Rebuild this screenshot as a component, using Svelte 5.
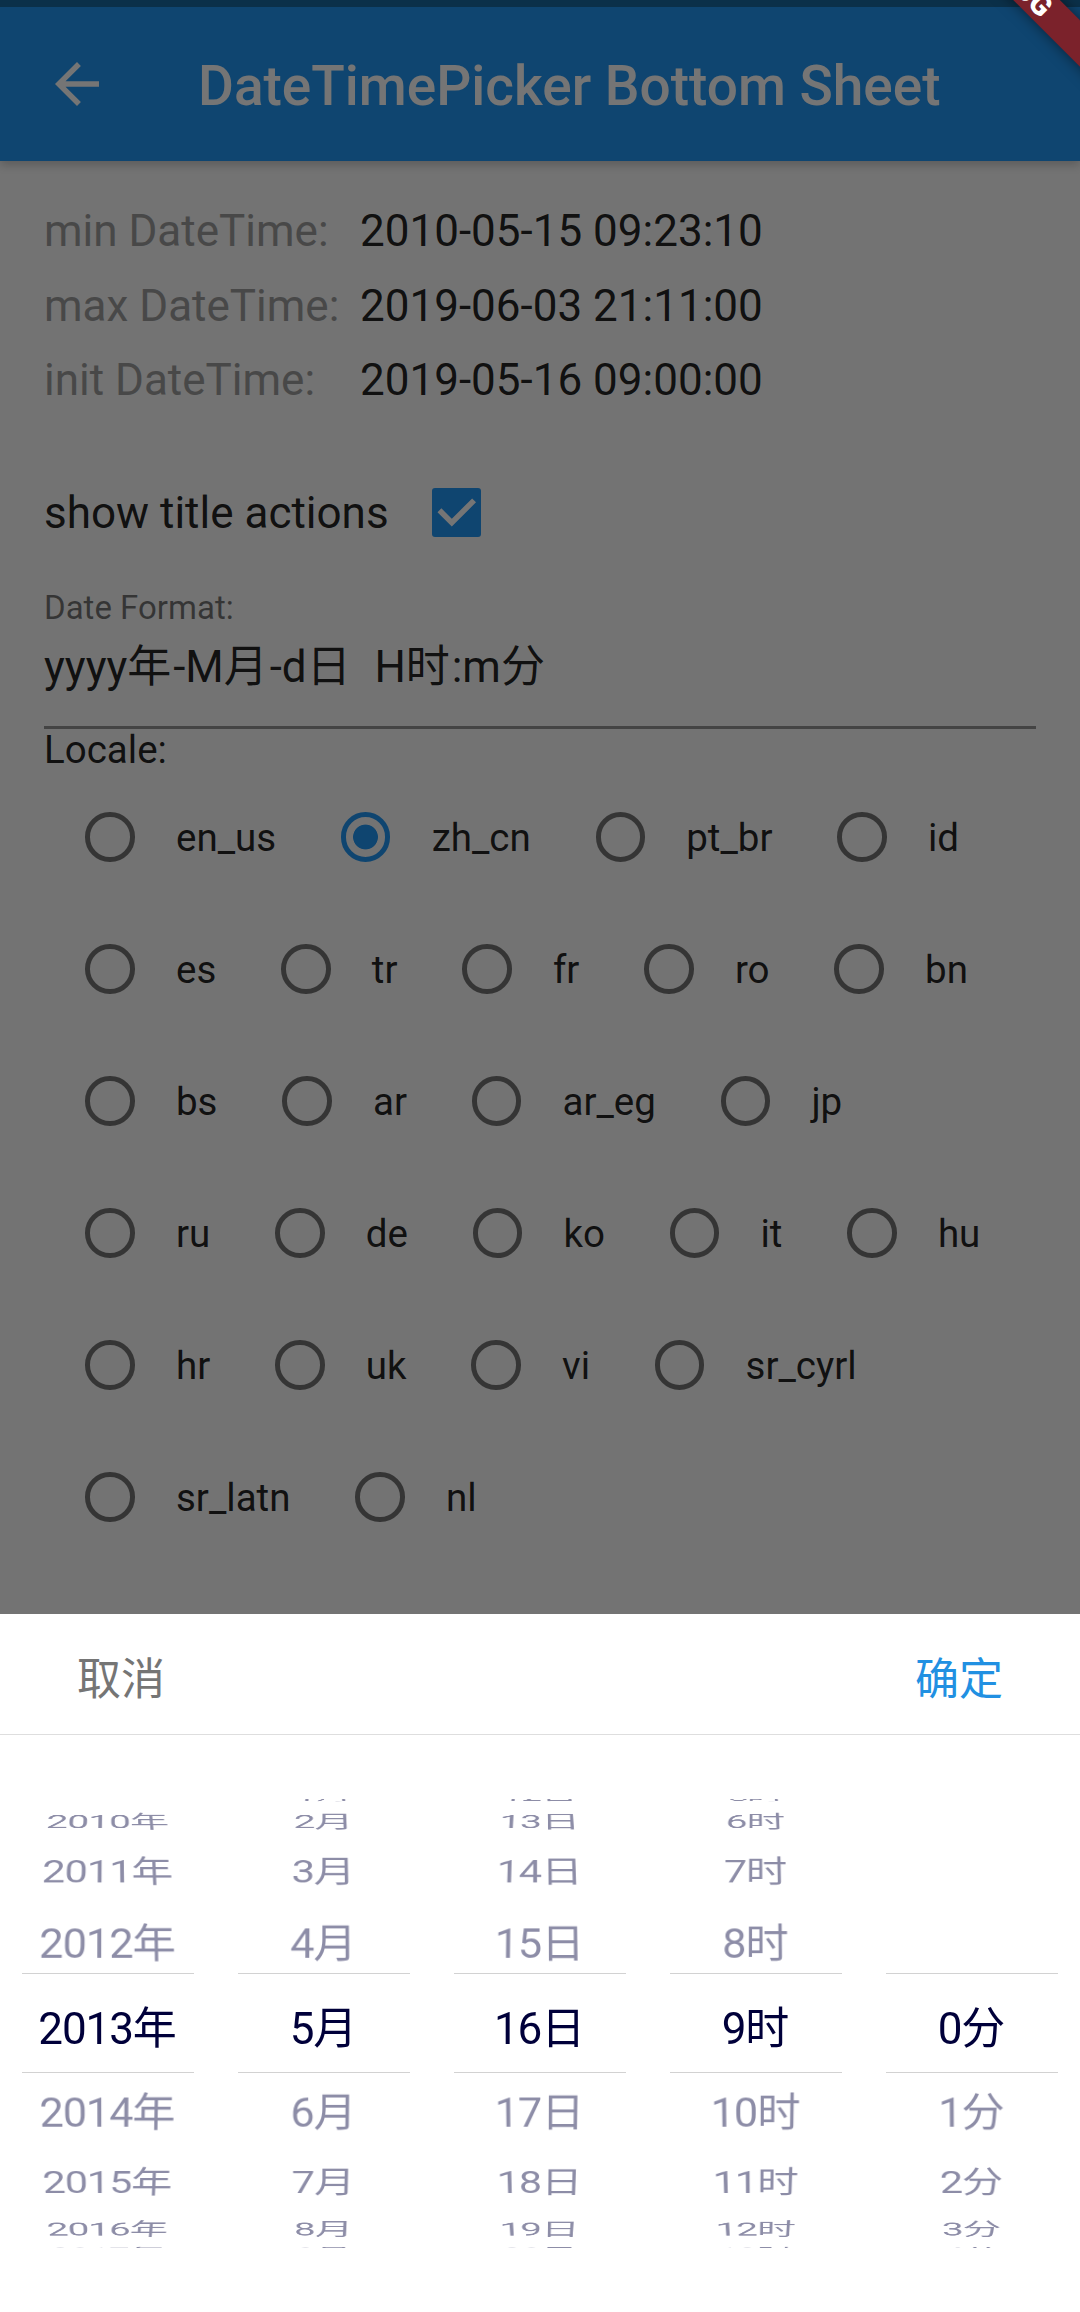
<script>
  const info = [
    ['min DateTime:', '2010-05-15 09:23:10'],
    ['max DateTime:', '2019-06-03 21:11:00'],
    ['init DateTime:', '2019-05-16 09:00:00'],
  ];

  const locales = [
    ['en_us', 'zh_cn', 'pt_br', 'id'],
    ['es', 'tr', 'fr', 'ro', 'bn'],
    ['bs', 'ar', 'ar_eg', 'jp'],
    ['ru', 'de', 'ko', 'it', 'hu'],
    ['hr', 'uk', 'vi', 'sr_cyrl'],
    ['sr_latn', 'nl'],
  ];
  let locale = $state('zh_cn');
  let showActions = $state(true);

  const wheels = [
    { unit: '年', min: 2010, value: 2013 },
    { unit: '月', min: 1, value: 5 },
    { unit: '日', min: 1, value: 16 },
    { unit: '时', min: 0, value: 9 },
    { unit: '分', min: 0, value: 0 },
  ];

  // Angle between neighbouring items on the wheel, in radians;
  // the outermost items stop at the rim.
  const STEP = 0.28;
  const RIM = 1.09;
  const offsets = [-4, -3, -2, -1, 0, 1, 2, 3, 4];
  const itemsOf = (w) => offsets.filter((o) => w.value + o >= w.min);
  const angle = (o) => -Math.sign(o) * Math.min(Math.abs(o) * STEP, RIM);
</script>

<div class="screen">
  <div class="status"></div>
  <header>
    <svg class="back" viewBox="0 0 24 24"><path d="M20 11H7.83l5.59-5.59L12 4l-8 8 8 8 1.41-1.41L7.83 13H20v-2z" /></svg>
    <h1>DateTimePicker Bottom Sheet</h1>
  </header>

  <main>
    <dl>
      {#each info as [label, value]}
        <div class="info"><dt>{label}</dt><dd>{value}</dd></div>
      {/each}
    </dl>

    <div class="option">
      <span>show title actions</span>
      <button class="check" aria-label="show title actions" onclick={() => (showActions = !showActions)}>
        {#if showActions}
          <svg viewBox="0 0 18 18"><path d="M2.7 8.1 7.2 12.6 15.3 4.5" /></svg>
        {/if}
      </button>
    </div>

    <div class="field">
      <div class="field-label">Date Format:</div>
      <div class="field-value">yyyy<i>年</i>-M<i>月</i>-d<i>日</i>&nbsp; H<i>时</i>:m<i>分</i></div>
    </div>

    <div class="locale-title">Locale:</div>
    {#each locales as row}
      <div class="locales">
        {#each row as name}
          <button class="choice" onclick={() => (locale = name)}>
            <span class="tap"><span class="radio" class:on={locale === name}></span></span>{name}
          </button>
        {/each}
      </div>
    {/each}
  </main>

  <div class="scrim"></div>

  <section class="sheet">
    <div class="actions">
      <button class="cancel">取消</button>
      <button class="confirm">确定</button>
    </div>
    <div class="picker">
      {#each wheels as w}
        <div class="wheel">
          <div class="drum">
            {#each itemsOf(w) as o}
              <div class="item" class:selected={o === 0} style="--a: {angle(o)}rad">{w.value + o}{w.unit}</div>
            {/each}
          </div>
          <div class="window"></div>
        </div>
      {/each}
    </div>
  </section>

  <div class="banner">DEBUG</div>
</div>

<style>
  :global(body) { margin: 0; }
  .screen {
    position: relative;
    display: flex;
    flex-direction: column;
    width: 1080px;
    height: 2312px;
    overflow: hidden;
    background: #fafafa;
    color: rgba(0, 0, 0, 0.87);
    font-family: Roboto, "Noto Sans CJK SC", sans-serif;
    font-size: 44px;
  }
  button {
    padding: 0;
    border: 0;
    background: none;
    color: inherit;
    font: inherit;
  }
  .status { height: 7px; background: #19699f; z-index: 1; }
  header {
    display: flex;
    align-items: center;
    height: 154px;
    padding-left: 44px;
    gap: 88px;
    background: #2196f3;
    color: #fff;
    box-shadow: 0 4px 9px rgba(0, 0, 0, 0.2);
  }
  .back { width: 66px; height: 66px; fill: currentColor; }
  h1 { margin: 3px 0 0; font-size: 55px; font-weight: 500; line-height: 64px; }

  main { display: flex; flex-direction: column; padding: 33px 44px 0; }
  dl { margin: 0; }
  .info { display: flex; height: 74.5px; line-height: 74.5px; }
  dt { width: 316px; color: #9e9e9e; }
  dd { margin: 0; }

  .option { display: flex; align-items: center; height: 132px; margin-top: 29px; }
  .check {
    width: 49.5px;
    height: 49.5px;
    margin-left: 43px;
    border-radius: 3px;
    background: #2196f3;
  }
  .check svg { display: block; width: 100%; height: 100%; fill: none; stroke: #fff; stroke-width: 2; }

  .field {
    height: 138px;
    padding-top: 9.5px;
    border-bottom: 3px solid #949494;
  }
  .field-label { font-size: 33px; line-height: 39px; color: rgba(0, 0, 0, 0.54); }
  .field-value { margin-top: 10px; line-height: 60px; }
  .field-value i { font-style: normal; letter-spacing: 1.9px; }

  .locale-title { height: 42px; font-size: 38.5px; line-height: 41px; }
  .locales { display: flex; gap: 23.5px; height: 132px; font-size: 38.5px; }
  .choice { display: flex; align-items: center; }
  .tap { display: flex; align-items: center; justify-content: center; width: 132px; height: 132px; }
  .radio {
    box-sizing: border-box;
    width: 49.5px;
    height: 49.5px;
    border: 5.5px solid #757575;
    border-radius: 50%;
  }
  .radio.on {
    border-color: #2196f3;
    background: radial-gradient(circle, #2196f3 12px, transparent 12.8px);
  }

  .scrim { position: absolute; inset: 0; z-index: 2; background: rgba(0, 0, 0, 0.54); }

  .sheet { position: absolute; z-index: 3; left: 0; right: 0; bottom: 0; height: 698.5px; background: #fff; }
  .actions {
    display: flex;
    align-items: center;
    justify-content: space-between;
    box-sizing: border-box;
    height: 121px;
    padding: 12px 77px 0;
    border-bottom: 1px solid #dedede;
    line-height: 52px;
  }
  .cancel { color: #757575; }
  .confirm { color: #2190e2; }

  .picker { display: grid; grid-template-columns: repeat(5, 1fr); height: 577px; }
  .wheel { display: grid; align-items: center; }
  .drum, .window { grid-area: 1 / 1; }
  .drum {
    display: grid;
    align-items: center;
    height: 449px;
    overflow: hidden;
    perspective: 760px;
  }
  .item {
    grid-area: 1 / 1;
    height: 99px;
    padding-right: 2px;
    line-height: 111px;
    text-align: center;
    letter-spacing: -1.1px;
    white-space: nowrap;
    color: #00003a;
    opacity: 0.45;
    transform: translateZ(-311px) rotateX(var(--a)) translateZ(311px);
  }
  .item.selected { opacity: 1; }
  .window {
    box-sizing: border-box;
    height: 100px;
    margin: 0 22px;
    border: solid #d2d2d2;
    border-width: 1px 0;
  }

  .banner {
    position: absolute;
    z-index: 4;
    top: -38.5px;
    left: 865px;
    width: 300px;
    height: 33px;
    transform: rotate(45deg);
    background: #7b222b;
    box-shadow: 0 0 14px rgba(0, 0, 0, 0.5);
    color: #fff;
    font-size: 29px;
    font-weight: 900;
    line-height: 34px;
    text-align: center;
  }
</style>
